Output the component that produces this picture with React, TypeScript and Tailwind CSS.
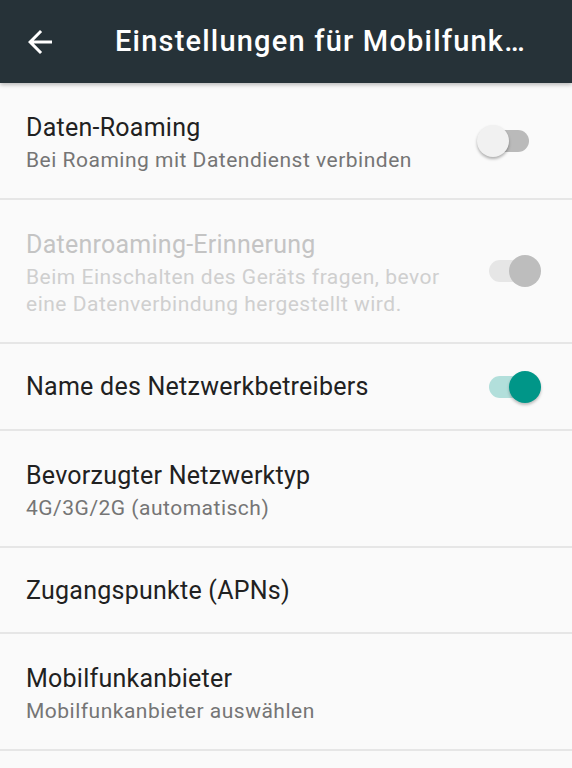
type Row = {
  title: string
  sub?: string
  h: string
  toggle?: 'off' | 'on' | 'disabledOn'
  disabled?: boolean
}

const rows: Row[] = [
  { title: 'Daten-Roaming', sub: 'Bei Roaming mit Datendienst verbinden', h: 'h-[117px]', toggle: 'off' },
  {
    title: 'Datenroaming-Erinnerung',
    sub: 'Beim Einschalten des Geräts fragen, bevor eine Datenverbindung hergestellt wird.',
    h: 'h-[144px]',
    toggle: 'disabledOn',
    disabled: true,
  },
  { title: 'Name des Netzwerkbetreibers', h: 'h-[87px]', toggle: 'on' },
  { title: 'Bevorzugter Netzwerktyp', sub: '4G/3G/2G (automatisch)', h: 'h-[117px]' },
  { title: 'Zugangspunkte (APNs)', h: 'h-[86px]' },
  { title: 'Mobilfunkanbieter', sub: 'Mobilfunkanbieter auswählen', h: 'h-[117px]' },
]

function Toggle({ state }: { state: 'off' | 'on' | 'disabledOn' }) {
  const track =
    state === 'on' ? 'bg-[#b2dfdb]' : state === 'off' ? 'bg-[#bababa]' : 'bg-[#e6e6e6]'
  const thumb =
    state === 'on'
      ? 'bg-[#009688] right-0 shadow-[0_2px_3px_rgba(0,0,0,0.25)]'
      : state === 'off'
        ? 'bg-[#f1f1f1] left-0 shadow-[0_2px_3px_rgba(0,0,0,0.3)]'
        : 'bg-[#bdbdbd] right-0'
  return (
    <div className="relative w-[64px] h-[32px] shrink-0 flex items-center justify-center">
      <div className={`w-[40px] h-[22px] rounded-full ${track}`} />
      <div className={`absolute top-0 w-[32px] h-[32px] rounded-full ${thumb}`} />
    </div>
  )
}

export default function App() {
  return (
    <div className="w-[572px] h-[768px] overflow-hidden bg-[#fafafa]" style={{ fontFamily: 'Roboto, sans-serif' }}>
      <header className="relative h-[83px] bg-[#263238] flex items-center shadow-[0_2px_4px_rgba(0,0,0,0.25)] z-10">
        <svg viewBox="0 0 24 24" className="ml-[22px] w-[36px] h-[36px] fill-white">
          <path d="M20 11H7.83l5.59-5.59L12 4l-8 8 8 8 1.41-1.41L7.83 13H20v-2z" />
        </svg>
        <h1 className="ml-[57px] text-[29px] font-medium text-white tracking-[1.2px] whitespace-nowrap">
          Einstellungen für Mobilfunk…
        </h1>
      </header>

      {rows.map((r) => (
        <div key={r.title} className={`${r.h} flex items-center border-b-2 border-[#e6e6e6] pl-[26px] pr-[31px]`}>
          <div className={`flex-1 min-w-0 ${r.sub ? 'pt-[5px]' : 'pt-[1px]'}`}>
            <div
              className={`text-[25px] leading-[32px] tracking-[0.25px] ${r.disabled ? 'text-[#c4c4c4]' : 'text-[#212121]'}`}
            >
              {r.title}
            </div>
            {r.sub && (
              <div
                className={`text-[21px] leading-[27px] mt-[3px] tracking-[0.5px] ${r.disabled ? 'text-[#cfcfcf]' : 'text-[#757575]'}`}
              >
                {r.sub}
              </div>
            )}
          </div>
          {r.toggle && <Toggle state={r.toggle} />}
        </div>
      ))}
    </div>
  )
}
